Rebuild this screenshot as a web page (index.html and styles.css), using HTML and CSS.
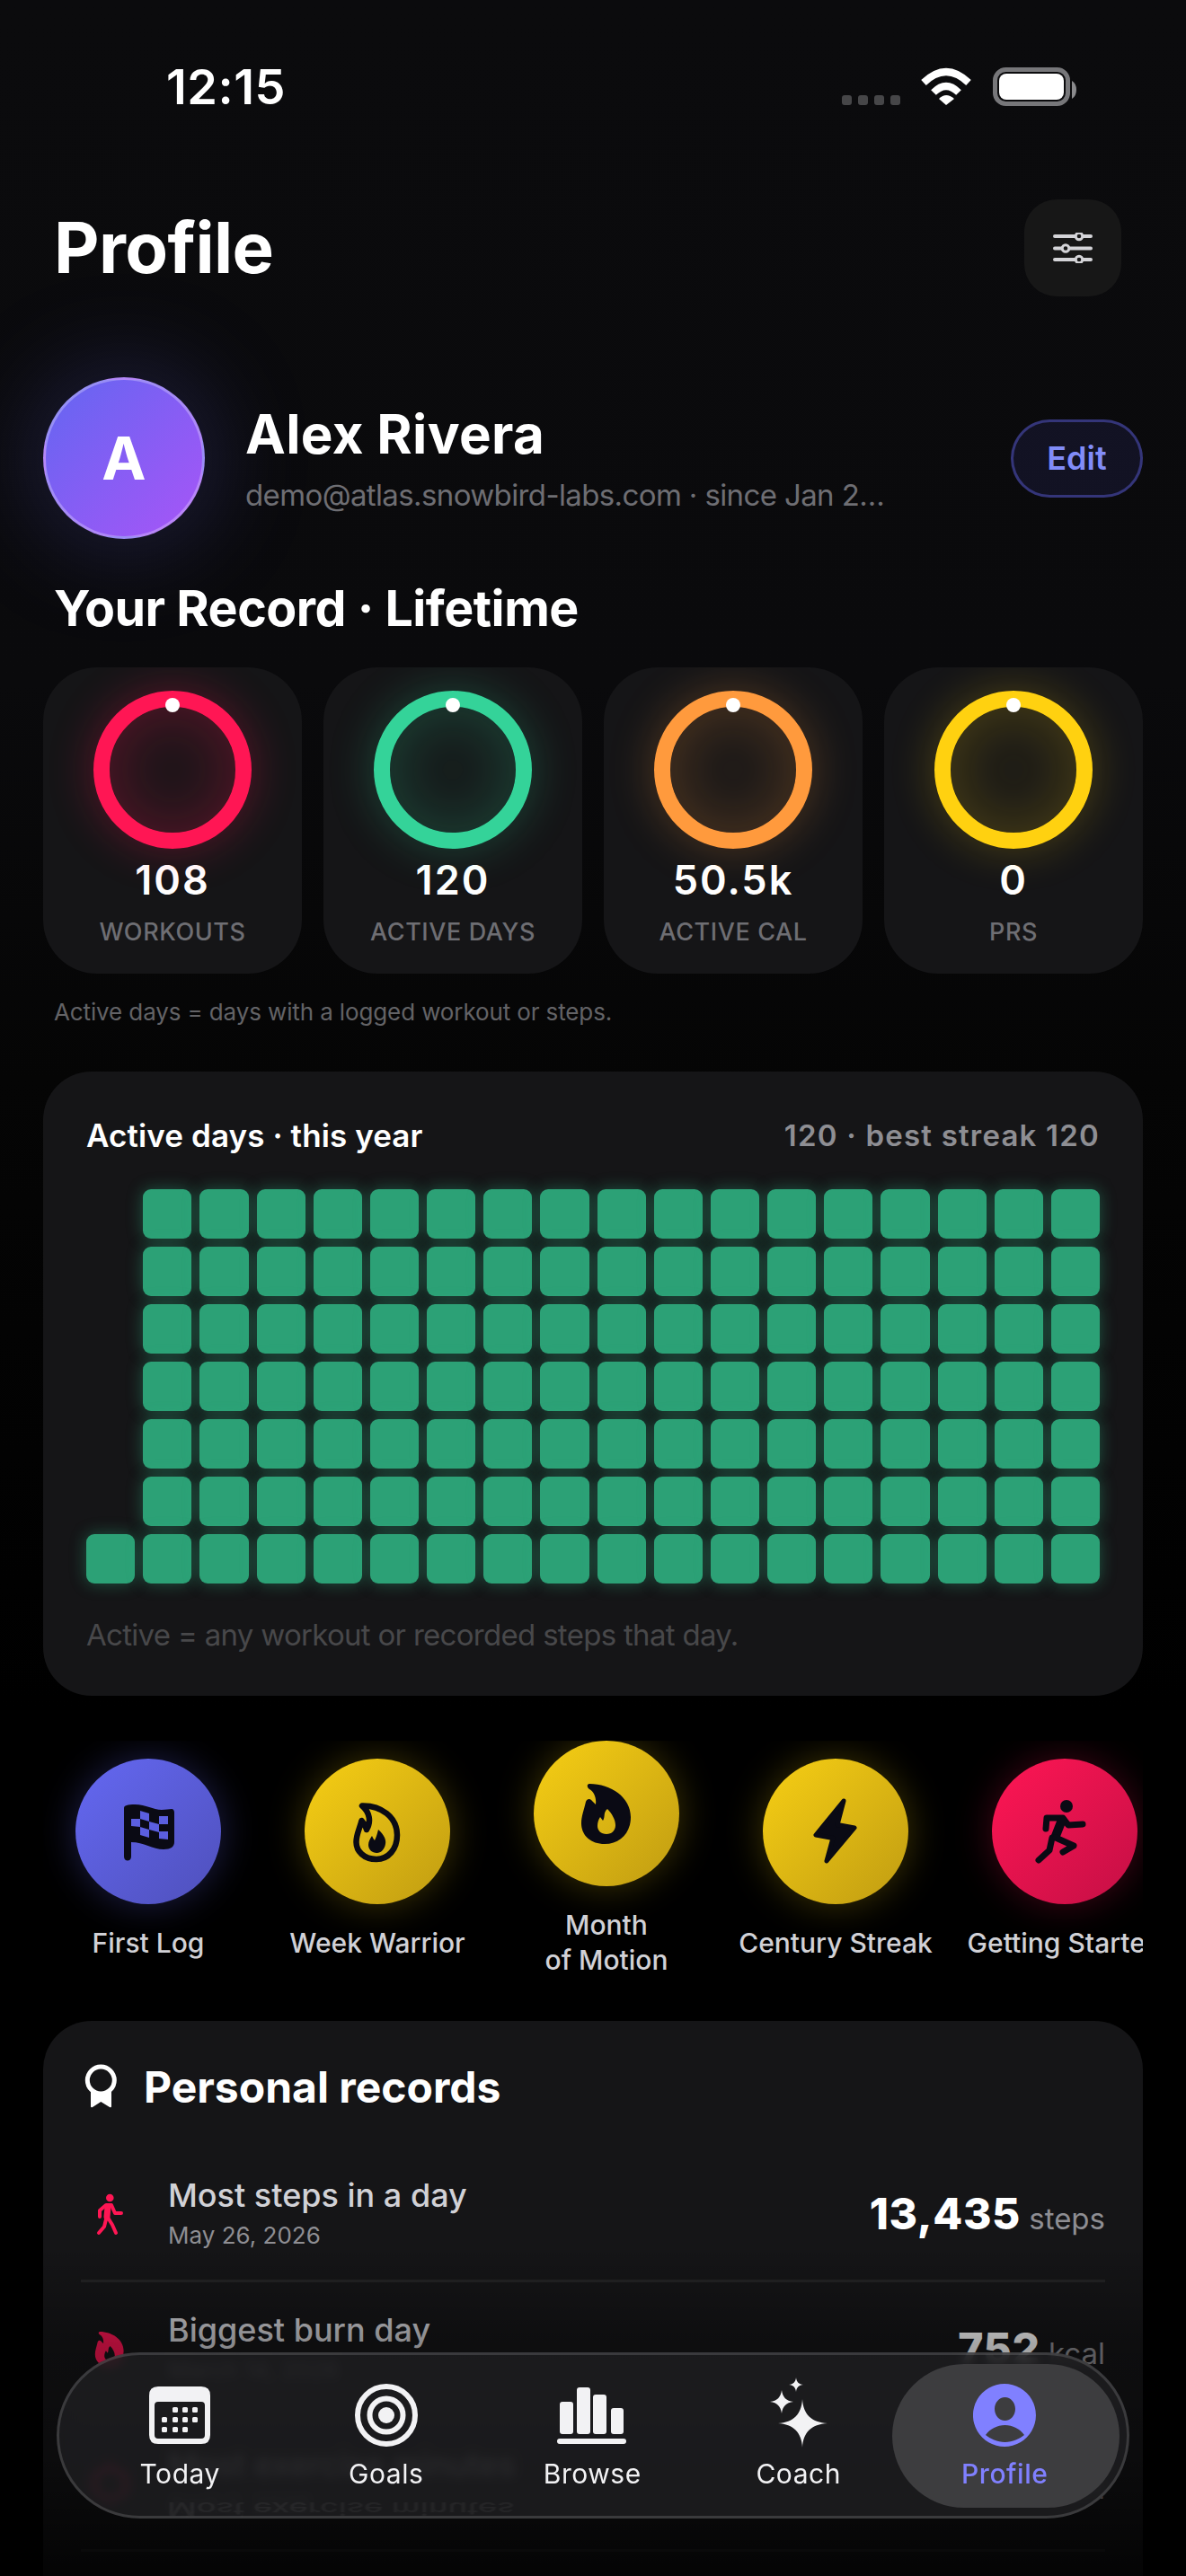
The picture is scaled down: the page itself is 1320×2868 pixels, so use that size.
FILE: index.html
```html
<!DOCTYPE html>
<html lang="en">
<head>
<meta charset="utf-8">
<title>Profile</title>
<link rel="stylesheet" href="styles.css">
</head>
<body>
<div class="screen">
  <div class="status">
    <span class="time">12:15</span>
    <svg class="status-icons" viewBox="930 70 272 52" width="272" height="52">
      <g fill="#464648"><rect x="937" y="106" width="11" height="11" rx="3"/><rect x="955" y="106" width="11" height="11" rx="3"/><rect x="973" y="106" width="11" height="11" rx="3"/><rect x="991" y="106" width="11" height="11" rx="3"/></g>
      <g fill="none" stroke="#fff" stroke-width="8"><path d="M1028 92Q1053 68 1078 92"/><path d="M1039 103Q1053 89 1067 103"/></g>
      <path d="M1045 110Q1053 102 1062 110L1053 117Z" fill="#fff"/>
      <rect x="1107.5" y="77.5" width="81" height="38" rx="12" fill="none" stroke="#77777a" stroke-width="5"/>
      <rect x="1112" y="82" width="72" height="29" rx="8" fill="#fff"/>
      <path d="M1193 90q5 3 5 10t-5 10z" fill="#8a8a8d"/>
    </svg>
  </div>

  <header class="header">
    <h1 class="title">Profile</h1>
    <button class="settings">
      <svg viewBox="0 0 44 34" width="44" height="34" fill="none" stroke="#d4d4d8" stroke-width="4" stroke-linecap="round">
        <path d="M2 4H42M2 17.500H42M2 30H42"/>
        <g fill="#171717" stroke-width="3"><circle cx="29" cy="4" r="3.800"/><circle cx="14" cy="17.500" r="3.800"/><circle cx="29" cy="30" r="3.800"/></g>
      </svg>
    </button>
  </header>

  <section class="identity">
    <div class="avatar">A</div>
    <div class="who">
      <div class="name">Alex Rivera</div>
      <div class="email">demo@atlas.snowbird-labs.com · since Jan 2026</div>
    </div>
    <button class="edit">Edit</button>
  </section>

  <h2 class="section-title">Your Record · Lifetime</h2>

  <div class="stats">
    <div class="stat"><div class="ring ring-red"><i class="ring-dot"></i></div><div class="stat-value">108</div><div class="stat-label">WORKOUTS</div></div>
    <div class="stat"><div class="ring ring-green"><i class="ring-dot"></i></div><div class="stat-value">120</div><div class="stat-label">ACTIVE DAYS</div></div>
    <div class="stat"><div class="ring ring-orange"><i class="ring-dot"></i></div><div class="stat-value">50.5k</div><div class="stat-label">ACTIVE CAL</div></div>
    <div class="stat"><div class="ring ring-yellow"><i class="ring-dot"></i></div><div class="stat-value">0</div><div class="stat-label">PRS</div></div>
  </div>

  <p class="note">Active days = days with a logged workout or steps.</p>

  <section class="card heat">
    <div class="heat-head"><span class="heat-title">Active days · this year</span><span class="heat-meta">120 · best streak 120</span></div>
    <div class="heat-grid">
      <i class="off"></i><i></i><i></i><i></i><i></i><i></i><i></i><i></i><i></i><i></i><i></i><i></i><i></i><i></i><i></i><i></i><i></i><i></i>
      <i class="off"></i><i></i><i></i><i></i><i></i><i></i><i></i><i></i><i></i><i></i><i></i><i></i><i></i><i></i><i></i><i></i><i></i><i></i>
      <i class="off"></i><i></i><i></i><i></i><i></i><i></i><i></i><i></i><i></i><i></i><i></i><i></i><i></i><i></i><i></i><i></i><i></i><i></i>
      <i class="off"></i><i></i><i></i><i></i><i></i><i></i><i></i><i></i><i></i><i></i><i></i><i></i><i></i><i></i><i></i><i></i><i></i><i></i>
      <i class="off"></i><i></i><i></i><i></i><i></i><i></i><i></i><i></i><i></i><i></i><i></i><i></i><i></i><i></i><i></i><i></i><i></i><i></i>
      <i class="off"></i><i></i><i></i><i></i><i></i><i></i><i></i><i></i><i></i><i></i><i></i><i></i><i></i><i></i><i></i><i></i><i></i><i></i>
      <i></i><i></i><i></i><i></i><i></i><i></i><i></i><i></i><i></i><i></i><i></i><i></i><i></i><i></i><i></i><i></i><i></i><i></i>
    </div>
    <p class="heat-foot">Active = any workout or recorded steps that day.</p>
  </section>

  <div class="badges">
    <div class="badge">
      <div class="medal medal-blue">
        <svg viewBox="0 0 70 75" width="70" height="75">
          <path fill="#0a0a14" d="M8 12C8 9 12 8 20 8C33 8 40 14 50 14C55 14 58 13 61 13C63 13 64 15 64 17V50C64 55 60 58 52 58C40 58 30 50 16 50V66C16 72 8 72 8 66Z"/>
          <g fill="#5b5fe0"><path d="M26 15L36 18V27L26 24Z"/><path d="M47 21L57 21V30L47 30Z"/><path d="M16 24H26V33L16 32Z"/><path d="M36 27L47 30V39L36 36Z"/><path d="M26 33L36 36V45L26 42Z"/><path d="M47 38L57 38V47L47 46Z"/></g>
        </svg>
      </div>
      <div class="badge-label">First Log</div>
    </div>
    <div class="badge">
      <div class="medal medal-gold">
        <svg viewBox="0 0 60 76" width="60" height="76">
          <path fill="none" stroke="#0a0a14" stroke-width="6.5" stroke-linejoin="round" d="M13 9.5C34 9 52 22 52 42C52 58 42 69 29 69C15 69 6.5 60 6.5 50C6.5 41 10 36 12.5 26C15 29 17 32 18 36C23 28 22 17 13 9.5Z"/>
          <path fill="#0a0a14" d="M31 36C38 42 40 48 39 52C38 58 34 62 29.5 62C24 62 20 58 20 53C20 49 22 46 24 43C25 45 26 47 27 48C29 44 30 40 31 36Z"/>
        </svg>
      </div>
      <div class="badge-label">Week Warrior</div>
    </div>
    <div class="badge">
      <div class="medal medal-gold">
        <svg viewBox="0 0 62 76" width="62" height="76">
          <path fill="#0a0a14" fill-rule="evenodd" d="M12 5C36 5 58 20 58 42C58 60 46 72 29 72C13 72 3 62 3 49C3 41 6 34 8 25C9 22 12 21 14 23L19 28C20 20 17 14 12 11C9 9 9 5 12 5ZM32 33C27 37 30 42 27 46C26 45 25 43 24 42C22 45 21 48 21 52C21 57 25 61 31 61C37 61 41 57 41 51C41 45 37 38 32 33Z"/>
        </svg>
      </div>
      <div class="badge-label">Month<br>of Motion</div>
    </div>
    <div class="badge">
      <div class="medal medal-gold">
        <svg viewBox="0 0 60 78" width="60" height="78">
          <path fill="#0a0a14" stroke="#0a0a14" stroke-width="5" stroke-linejoin="round" d="M39 5L8 43L27 46.5L20 72L51 35L32 31.5Z"/>
        </svg>
      </div>
      <div class="badge-label">Century Streak</div>
    </div>
    <div class="badge">
      <div class="medal medal-red">
        <svg viewBox="0 0 80 85" width="80" height="85" fill="none" stroke="#0a0a14" stroke-linecap="round" stroke-linejoin="round">
          <circle cx="42" cy="15" r="7" fill="#0a0a14" stroke="none"/>
          <path stroke-width="7" d="M19 40L20 28H38L44 36L60 35"/>
          <path stroke-width="10" d="M37 30L30 48"/>
          <path stroke-width="7" d="M26 50L23 64L11 75"/>
          <path stroke-width="7" d="M30 50L50 59L38 66"/>
        </svg>
      </div>
      <div class="badge-label">Getting Started</div>
    </div>
  </div>

  <section class="card records">
    <h3 class="records-title">
      <svg viewBox="0 0 40 54" width="40" height="54">
        <path fill="#fff" d="M9 32V49Q9 51 11 50L20.300 44L30 50Q32 51 32 49V32Z"/>
        <circle cx="20.300" cy="20" r="15" fill="#151517" stroke="#fff" stroke-width="5"/>
      </svg>
      Personal records
    </h3>
    <div class="record">
      <div class="record-icon">
        <svg viewBox="0 0 45 55" width="45" height="55" fill="none" stroke="#ff1654" stroke-linecap="round" stroke-linejoin="round">
          <circle cx="22.300" cy="10" r="4.300" fill="#ff1654" stroke="none"/>
          <path stroke-width="4" d="M11 31V24L18 18H24L28 27H35"/>
          <path stroke-width="7" d="M20 20L19 31"/>
          <path stroke-width="4" d="M18 34L16 42L10 49M20 32L25 40L29 49"/>
        </svg>
      </div>
      <div class="record-text"><div class="record-name">Most steps in a day</div><div class="record-date">May 26, 2026</div></div>
      <div class="record-value"><b>13,435</b> <span>steps</span></div>
    </div>
    <div class="record">
      <div class="record-icon">
        <svg viewBox="0 0 62 76" width="36" height="44">
          <path fill="#ff1654" fill-rule="evenodd" d="M12 5C36 5 58 20 58 42C58 60 46 72 29 72C13 72 3 62 3 49C3 41 6 34 8 25C9 22 12 21 14 23L19 28C20 20 17 14 12 11C9 9 9 5 12 5ZM32 33C27 37 30 42 27 46C26 45 25 43 24 42C22 45 21 48 21 52C21 57 25 61 31 61C37 61 41 57 41 51C41 45 37 38 32 33Z"/>
        </svg>
      </div>
      <div class="record-text"><div class="record-name">Biggest burn day</div><div class="record-date">March 14, 2026</div></div>
      <div class="record-value"><b>752</b> <span>kcal</span></div>
    </div>
    <div class="record">
      <div class="record-icon">
        <svg viewBox="0 0 44 44" width="44" height="44" fill="none" stroke="#ff1654" stroke-width="6">
          <path d="M22 3L40 14V32L22 41L5 30V14Z"/>
        </svg>
      </div>
      <div class="record-text"><div class="record-name">Most exercise minutes</div><div class="record-date">April 2, 2026</div></div>
      <div class="record-value"><b>94</b> <span>min</span></div>
    </div>
  </section>

  <div class="fade"></div>

  <nav class="tabbar">
    <div class="reflection">Most exercise minutes</div>
    <div class="tab">
      <svg class="tab-icon" viewBox="0 0 68 64" width="68" height="64" fill="#f2f2f4">
        <path fill-rule="evenodd" d="M10 0H58Q68 0 68 10V54Q68 64 58 64H10Q0 64 0 54V10Q0 0 10 0ZM10 17Q6 17 6 21V54Q6 58 10 58H58Q62 58 62 54V21Q62 17 58 17Z"/>
        <g><rect x="26" y="23" width="6" height="6" rx="1.500"/><rect x="37" y="23" width="6" height="6" rx="1.500"/><rect x="48" y="23" width="6" height="6" rx="1.500"/><rect x="14" y="34" width="6" height="6" rx="1.500"/><rect x="26" y="34" width="6" height="6" rx="1.500"/><rect x="37" y="34" width="6" height="6" rx="1.500"/><rect x="48" y="34" width="6" height="6" rx="1.500"/><rect x="14" y="45" width="6" height="6" rx="1.500"/><rect x="26" y="45" width="6" height="6" rx="1.500"/><rect x="37" y="45" width="6" height="6" rx="1.500"/></g>
      </svg>
      <span class="tab-label">Today</span>
    </div>
    <div class="tab">
      <svg class="tab-icon" viewBox="0 0 70 70" width="70" height="70" fill="none" stroke="#f2f2f4" stroke-width="6">
        <circle cx="35" cy="35" r="32"/><circle cx="35" cy="35" r="18.500"/><circle cx="35" cy="35" r="9" fill="#f2f2f4" stroke="none"/>
      </svg>
      <span class="tab-label">Goals</span>
    </div>
    <div class="tab">
      <svg class="tab-icon" viewBox="620 2656 78 70" width="78" height="70" fill="#f2f2f4">
        <rect x="623" y="2676" width="15" height="36" rx="3"/><rect x="642" y="2660" width="15" height="52" rx="3"/><rect x="660" y="2668" width="15" height="44" rx="3"/><rect x="680" y="2683" width="14" height="29" rx="3"/><rect x="620" y="2717" width="77" height="6" rx="3"/>
      </svg>
      <span class="tab-label">Browse</span>
    </div>
    <div class="tab">
      <svg class="tab-icon tab-icon-tall" viewBox="855 2649 66 78" width="66" height="78" fill="#f2f2f4">
        <path d="M892 2673C893 2690 902 2699 920 2700C902 2701 893 2710 892 2727C891 2710 882 2701 865 2700C882 2699 891 2690 892 2673Z"/>
        <path d="M869 2663C870 2671 874 2675 882 2676C874 2677 870 2681 869 2689C868 2681 864 2677 856 2676C864 2675 868 2671 869 2663Z"/>
        <path d="M885 2649C885.500 2654 888 2656.500 893 2657C888 2657.500 885.500 2660 885 2665C884.500 2660 882 2657.500 877 2657C882 2656.500 884.500 2654 885 2649Z"/>
      </svg>
      <span class="tab-label">Coach</span>
    </div>
    <div class="tab tab-active">
      <svg class="tab-icon" viewBox="1083 2656 70 70" width="70" height="70" fill="#8080ff">
        <path fill-rule="evenodd" d="M1118 2656A35 35 0 1 1 1117.900 2656ZM1118.500 2671C1112 2671 1107 2677 1107 2684C1107 2691 1112 2697 1118.500 2697C1125 2697 1130 2691 1130 2684C1130 2677 1125 2671 1118.500 2671ZM1097 2713C1102 2717 1110 2721 1118.500 2721C1127 2721 1135 2717 1140 2713C1135 2706 1127 2702 1118.500 2702C1110 2702 1102 2706 1097 2713Z"/>
      </svg>
      <span class="tab-label">Profile</span>
    </div>
  </nav>
</div>
</body>
</html>
```

FILE: styles.css
```css
* { box-sizing: border-box; }
html, body { margin: 0; padding: 0; height: 2868px; overflow: hidden; background: #000; }
body { font-family: Inter, "Liberation Sans", sans-serif; color: #fff; -webkit-font-smoothing: antialiased; }
h1, h2, h3, p { margin: 0; }
button { font-family: inherit; cursor: pointer; }

.screen {
  position: relative;
  width: 1320px;
  height: 2868px;
  overflow: hidden;
  padding: 0 48px;
  background: linear-gradient(180deg, #0b0b0d 0, #0a0a0c 760px, #050505 1200px, #000 1900px);
}

/* status bar */
.status { height: 222px; display: flex; justify-content: space-between; align-items: flex-start; padding: 70px 70px 0 137px; }
.time { font-size: 54px; line-height: 54px; font-weight: 600; letter-spacing: .5px; }
.status-icons { display: block; }

/* header */
.header { height: 108px; display: flex; justify-content: space-between; align-items: center; padding: 0 24px 0 12px; }
.title { font-size: 78px; line-height: 108px; font-weight: 700; letter-spacing: -.6px; }
.settings { width: 108px; height: 108px; border: 0; border-radius: 36px; background: #171717; display: flex; align-items: center; justify-content: center; padding: 0; }

/* identity */
.identity { margin-top: 90px; height: 180px; display: flex; align-items: center; }
.avatar {
  width: 180px; height: 180px; flex: none; border-radius: 50%;
  background: linear-gradient(135deg, #6366f1, #a855f7);
  border: 3px solid rgba(255,255,255,.28);
  box-shadow: 0 0 120px rgba(99,102,241,.28);
  display: flex; align-items: center; justify-content: center;
  font-size: 66px; font-weight: 700;
}
.who { margin-left: 45px; flex: 1; min-width: 0; }
.name { font-size: 60px; line-height: 68px; font-weight: 700; letter-spacing: .35px; }
.email { width: 720px; margin-top: 13px; font-size: 33px; line-height: 42px; color: #6e6e73; letter-spacing: -.62px; white-space: nowrap; overflow: hidden; text-overflow: ellipsis; }
.edit { width: 147px; height: 87px; flex: none; border-radius: 44px; border: 3px solid rgba(99,102,241,.42); background: rgba(99,102,241,.1); color: #818cf8; font-size: 36px; font-weight: 600; padding: 0; }

/* record */
.section-title { margin: 44px 0 0 12px; font-size: 55.500px; line-height: 66px; font-weight: 700; letter-spacing: -.5px; }
.stats { margin-top: 33px; display: grid; grid-template-columns: repeat(4, 1fr); gap: 24px; }
.stat { height: 341px; border-radius: 60px; background: #151517; display: flex; flex-direction: column; align-items: center; padding-top: 26px; overflow: hidden; }
.ring { position: relative; width: 176px; height: 176px; flex: none; border-radius: 50%; border: 18px solid var(--ring); box-shadow: 0 0 50px var(--glow), inset 0 0 80px var(--glow); }
.ring-red { --ring: #ff1654; --glow: rgba(255,22,84,.3); }
.ring-green { --ring: #34d399; --glow: rgba(52,211,153,.26); }
.ring-orange { --ring: #ff9a3d; --glow: rgba(255,154,61,.26); }
.ring-yellow { --ring: #ffd110; --glow: rgba(255,209,16,.24); }
.ring-dot { position: absolute; top: -10px; left: 50%; width: 16px; height: 16px; margin-left: -8px; border-radius: 50%; background: #fff; }
.stat-value { margin-top: 8px; font-size: 45px; line-height: 54px; font-weight: 600; letter-spacing: 2px; }
.stat-label { margin-top: 13px; font-size: 27px; line-height: 36px; font-weight: 500; color: #6e6e73; letter-spacing: .6px; }
.note { margin: 25px 0 0 12px; font-size: 26px; line-height: 36px; color: #636366; letter-spacing: -.12px; }

/* cards */
.card { background: #151517; border-radius: 54px; }
.heat { margin-top: 48px; padding: 47px 48px 47px; }
.heat-head { display: flex; justify-content: space-between; align-items: center; height: 48px; }
.heat-title { font-size: 35px; font-weight: 600; letter-spacing: .1px; }
.heat-meta { font-size: 33px; font-weight: 600; color: #8e8e93; letter-spacing: 1.200px; }
.heat-grid { margin-top: 36px; display: grid; grid-template-columns: repeat(18, 1fr); grid-auto-rows: 55px; gap: 9px; }
.heat-grid i { display: block; border-radius: 9px; background: #2ca176; box-shadow: 0 0 18px rgba(52,211,153,.34); }
.heat-grid i.off { background: none; box-shadow: none; }
.heat-foot { margin-top: 36px; font-size: 33px; line-height: 42px; color: #48484a; letter-spacing: -.7px; }

/* badges */
.badges { margin-top: 50px; height: 264px; display: flex; align-items: center; gap: 21px; overflow: hidden; }
.badge { width: 234px; flex: none; display: flex; flex-direction: column; align-items: center; }
.medal { width: 162px; height: 162px; border-radius: 50%; display: flex; align-items: center; justify-content: center; }
.medal-blue { background: linear-gradient(135deg, #6468f2, #4f50bb); box-shadow: 0 0 42px rgba(99,102,241,.3); }
.medal-gold { background: linear-gradient(135deg, #f7cf14, #c09c12); box-shadow: 0 0 42px rgba(247,207,20,.26); }
.medal-red { background: linear-gradient(135deg, #ff1654, #c40f45); box-shadow: 0 0 42px rgba(255,22,84,.26); }
.badge-label { margin-top: 24px; width: 234px; text-align: center; font-size: 30px; line-height: 39px; font-weight: 500; color: #d1d1d6; white-space: nowrap; }

/* records */
.records { margin-top: 48px; padding: 43px 42px 0; height: 800px; }
.records-title { display: flex; align-items: center; gap: 28px; height: 60px; padding-left: 2px; font-size: 48px; font-weight: 700; margin-bottom: 38px; }
.record { height: 150px; padding-bottom: 0; border-bottom: 3px solid #232325; display: flex; align-items: center; }
.record-icon { width: 64px; flex: none; display: flex; justify-content: center; margin-right: 33px; }
.record-text { flex: 1; }
.record-name { font-size: 36px; line-height: 46px; font-weight: 500; color: #d1d1d6; }
.record-date { margin-top: 2px; font-size: 26px; line-height: 40px; color: #8e8e93; }
.record-value { white-space: nowrap; color: #8e8e93; font-size: 33px; }
.record-value b { font-size: 48px; font-weight: 800; color: #fff; letter-spacing: .6px; }

/* overlays */
.fade { position: absolute; left: 0; right: 0; top: 2500px; bottom: 0; background: linear-gradient(180deg, rgba(0,0,0,0), rgba(0,0,0,.35) 110px, rgba(0,0,0,.45) 240px, rgba(0,0,0,.8)); pointer-events: none; }
.tabbar {
  position: absolute; left: 63px; top: 2619px; width: 1194px; height: 185px;
  border-radius: 92.500px; border: 3px solid rgba(255,255,255,.14);
  background: rgba(30,30,32,.84);
  backdrop-filter: blur(6px);
  display: flex; align-items: flex-start; padding: 10px 0 0 19.500px;
  overflow: hidden;
}
.reflection { position: absolute; left: 120px; top: 165px; font-size: 36px; line-height: 12px; font-weight: 500; color: rgba(255,255,255,.05); white-space: nowrap; transform: scaleY(-.55); filter: blur(1.2px); }
.tab { position: relative; width: 229.500px; height: 160px; flex: none; display: flex; flex-direction: column; align-items: center; justify-content: flex-start; padding-top: 22px; }
.tab-icon { height: 70px; display: block; position: relative; }
.tab-icon-tall { margin-top: -7px; height: 78px; margin-bottom: -1px; }
.tab-label { position: relative; margin-top: 9px; font-size: 30px; line-height: 42px; font-weight: 400; color: #f2f2f4; letter-spacing: .55px; }
.tab-active::before { content: ""; position: absolute; top: 0; bottom: 0; left: -11px; right: -13px; border-radius: 80px; background: #3d3d3f; }
.tab-active .tab-label { color: #8080ff; font-weight: 500; }
```
